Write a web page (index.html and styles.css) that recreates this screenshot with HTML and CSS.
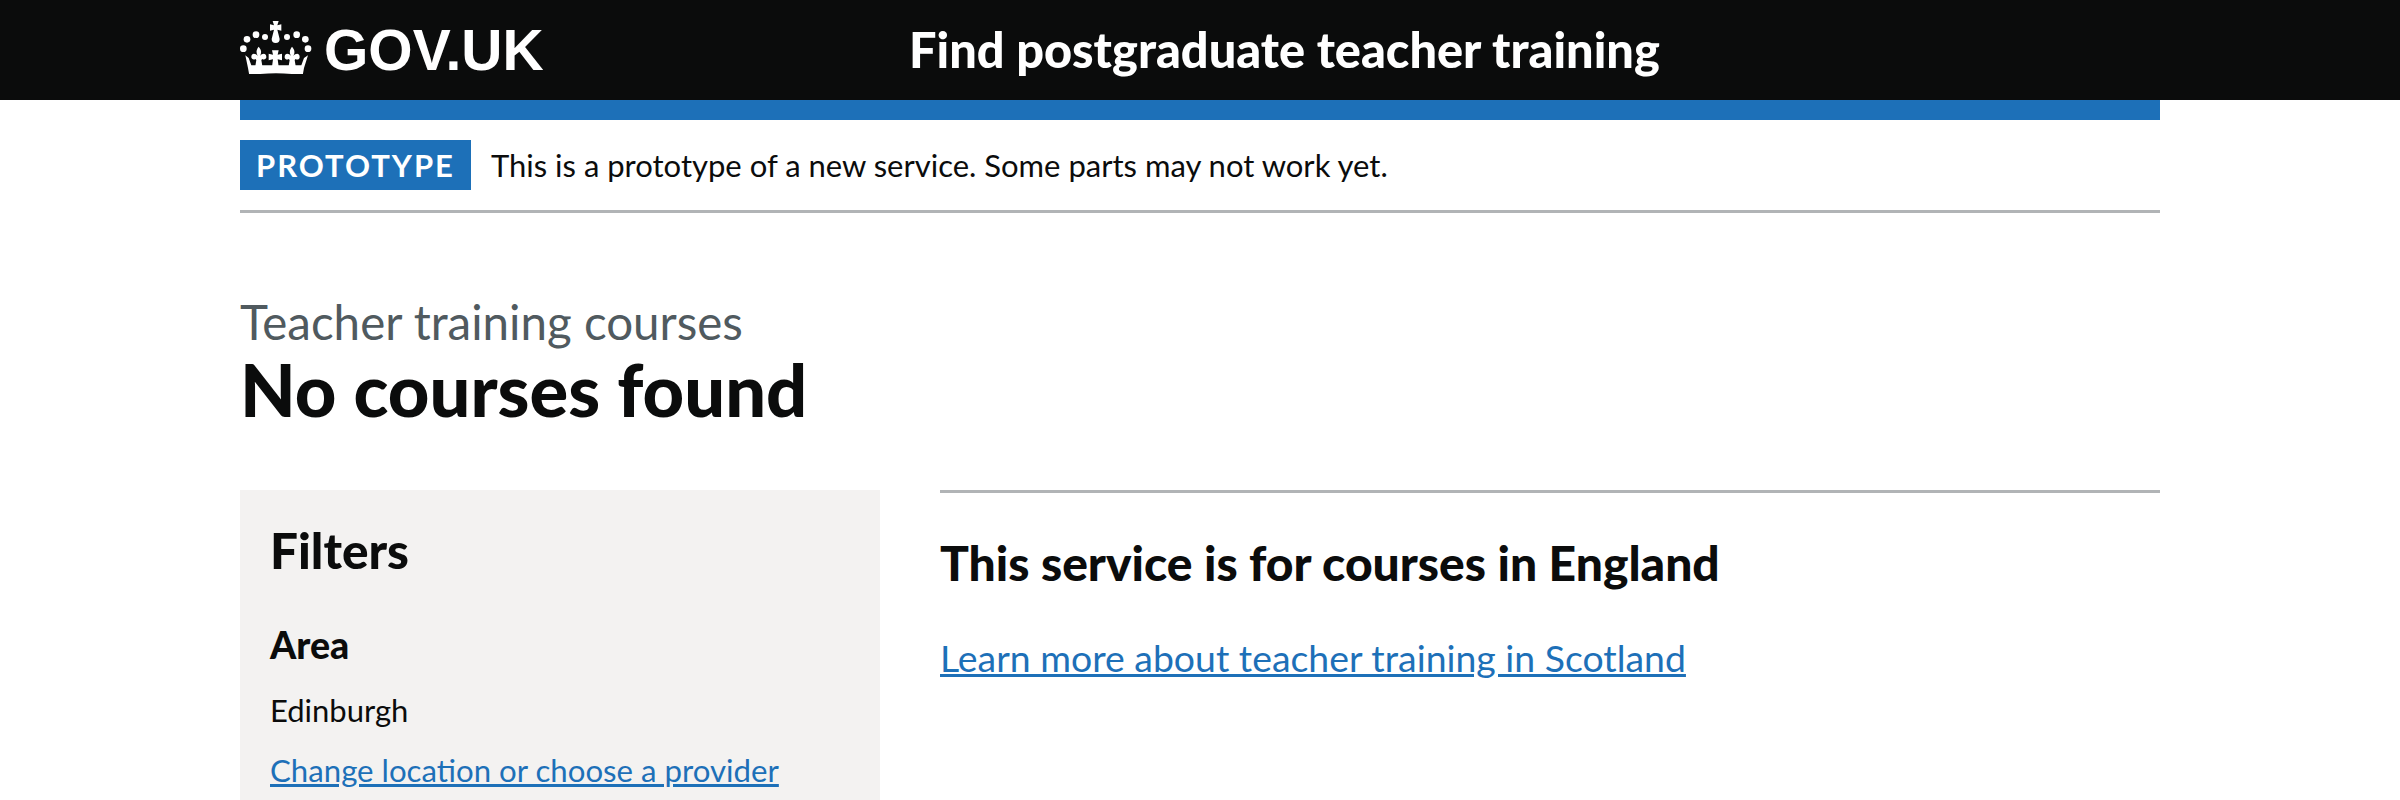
FILE: index.html
```html
<!DOCTYPE html>
<html lang="en">
    <head>
        <meta charset="UTF-8">
        <title>Find postgraduate teacher training</title>
        <link rel="stylesheet" href="styles.css">
    </head>
    <body>
        <header class="header">
            <div class="header-inner">
                <a class="logo" href="#">
                    <svg class="crown" viewBox="12 15 216 159" aria-hidden="true">
                        <!-- dots -->
                        <circle cx="22" cy="98" r="10"/>
                        <circle cx="33" cy="70" r="10"/>
                        <circle cx="60" cy="56" r="10"/>
                        <circle cx="87" cy="63" r="9"/>
                        <circle cx="153" cy="63" r="9"/>
                        <circle cx="182" cy="56" r="10"/>
                        <circle cx="208" cy="70" r="10"/>
                        <circle cx="216" cy="98" r="10"/>
                        <!-- top cross and drop -->
                        <path d="M110 15h18l-4 13 12-3v19l-12-3 7 28a12 12 0 1 1-24 0l7-28-12 3V25l12 3z"/>
                        <!-- fleurs and middle cross -->
                        <path d="M68 92c9 10 9 18 4 28 6-8 18-10 19 2 1 7-7 11-12 7l-3 3 3 18H58l3-18-3-3c-5 4-13 0-12-7 1-12 13-10 19-2-5-10-5-18 3-28z"/>
                        <path d="M168 92c9 10 9 18 4 28 6-8 18-10 19 2 1 7-7 11-12 7l-3 3 3 18h-21l3-18-3-3c-5 4-13 0-12-7 1-12 13-10 19-2-5-10-5-18 3-28z"/>
                        <path d="M108 103h20l-3 13 13-3v20l-13-3 3 22h-20l3-22-13 3v-20l13 3z"/>
                        <!-- band -->
                        <path d="M28 118l10 8 8 22h150l8-22 12-8-12 38-4 22c-50-8-110-8-160 0l-4-22z"/>
                    </svg>
                    <span>GOV.UK</span>
                </a>
                <a class="service-name" href="#">Find postgraduate teacher training</a>
            </div>
        </header>
        <div class="wrapper">
            <div class="blue-bar"></div>
            <div class="phase-banner">
                <strong class="tag">PROTOTYPE</strong>
                <span>This is a prototype of a new service. Some parts may not work yet.</span>
            </div>
            <main class="main">
                <span class="caption">Teacher training courses</span>
                <h1 class="title">No courses found</h1>
                <div class="columns">
                    <aside class="filters">
                        <h2 class="filters-title">Filters</h2>
                        <h3 class="filters-label">Area</h3>
                        <p class="filters-text">Edinburgh</p>
                        <a class="filters-link" href="#">Change location or choose a provider</a>
                    </aside>
                    <section class="results">
                        <h2 class="results-title">This service is for courses in England</h2>
                        <a class="results-link" href="#">Learn more about teacher training in Scotland</a>
                    </section>
                </div>
            </main>
        </div>
    </body>
</html>
```
FILE: styles.css
```css
*{
    margin: 0;
    padding: 0;
    box-sizing: border-box;
}
html,body{
    height: 800px;
    overflow: hidden;
}
body{
    font-family: Lato, "Liberation Sans", sans-serif;
    color: #0b0c0c;
    background-color: #fff;
}
a{
    color: #1d70b8;
}
.header{
    height: 100px;
    background-color: #0b0c0c;
}
.header-inner{
    width: 1920px;
    height: 100px;
    margin: 0 auto;
    display: flex;
    align-items: center;
}
.logo{
    width: 669px;
    display: flex;
    align-items: center;
    gap: 12px;
    color: #fff;
    text-decoration: none;
    font-family: "Liberation Sans", sans-serif;
    font-weight: bold;
    font-size: 57px;
}
.crown{
    width: 72px;
    height: 53px;
    margin-bottom: 5px;
    fill: #fff;
}
.service-name{
    margin-bottom: 3px;
    color: #fff;
    text-decoration: none;
    font-weight: 900;
    font-size: 48.7px;
}
.wrapper{
    width: 1920px;
    margin: 0 auto;
}
.blue-bar{
    height: 20px;
    background-color: #1d70b8;
}
.phase-banner{
    display: flex;
    align-items: center;
    gap: 20px;
    height: 93px;
    border-bottom: 3px solid #b1b4b6;
    font-size: 31px;
}
.tag{
    height: 50px;
    line-height: 50px;
    padding: 0 16px;
    background-color: #1d70b8;
    color: #fff;
    font-size: 31px;
    letter-spacing: 2px;
}
.main{
    padding-top: 79px;
}
.caption{
    display: block;
    font-size: 47.5px;
    line-height: 60px;
    color: #505a5f;
}
.title{
    font-size: 72.2px;
    line-height: 74px;
    margin-bottom: 64px;
    font-weight: 900;
}
.columns{
    display: flex;
    gap: 60px;
}
.filters{
    width: 640px;
    height: 310px;
    padding: 30px;
    background-color: #f3f2f1;
}
.filters-title{
    font-size: 49.5px;
    font-weight: 900;
    line-height: 60px;
    margin-bottom: 40px;
}
.filters-label{
    font-size: 37.5px;
    font-weight: 900;
    line-height: 50px;
    margin-bottom: 20px;
}
.filters-text{
    font-size: 31px;
    line-height: 40px;
    margin-bottom: 20px;
}
.filters-link{
    font-size: 31.2px;
    line-height: 40px;
}
.results{
    flex: 1;
    border-top: 3px solid #b1b4b6;
    padding-top: 40px;
}
.results-title{
    font-size: 48px;
    font-weight: 900;
    line-height: 60px;
    margin-bottom: 40px;
}
.results-link{
    font-size: 37.4px;
    line-height: 50px;
}
```
